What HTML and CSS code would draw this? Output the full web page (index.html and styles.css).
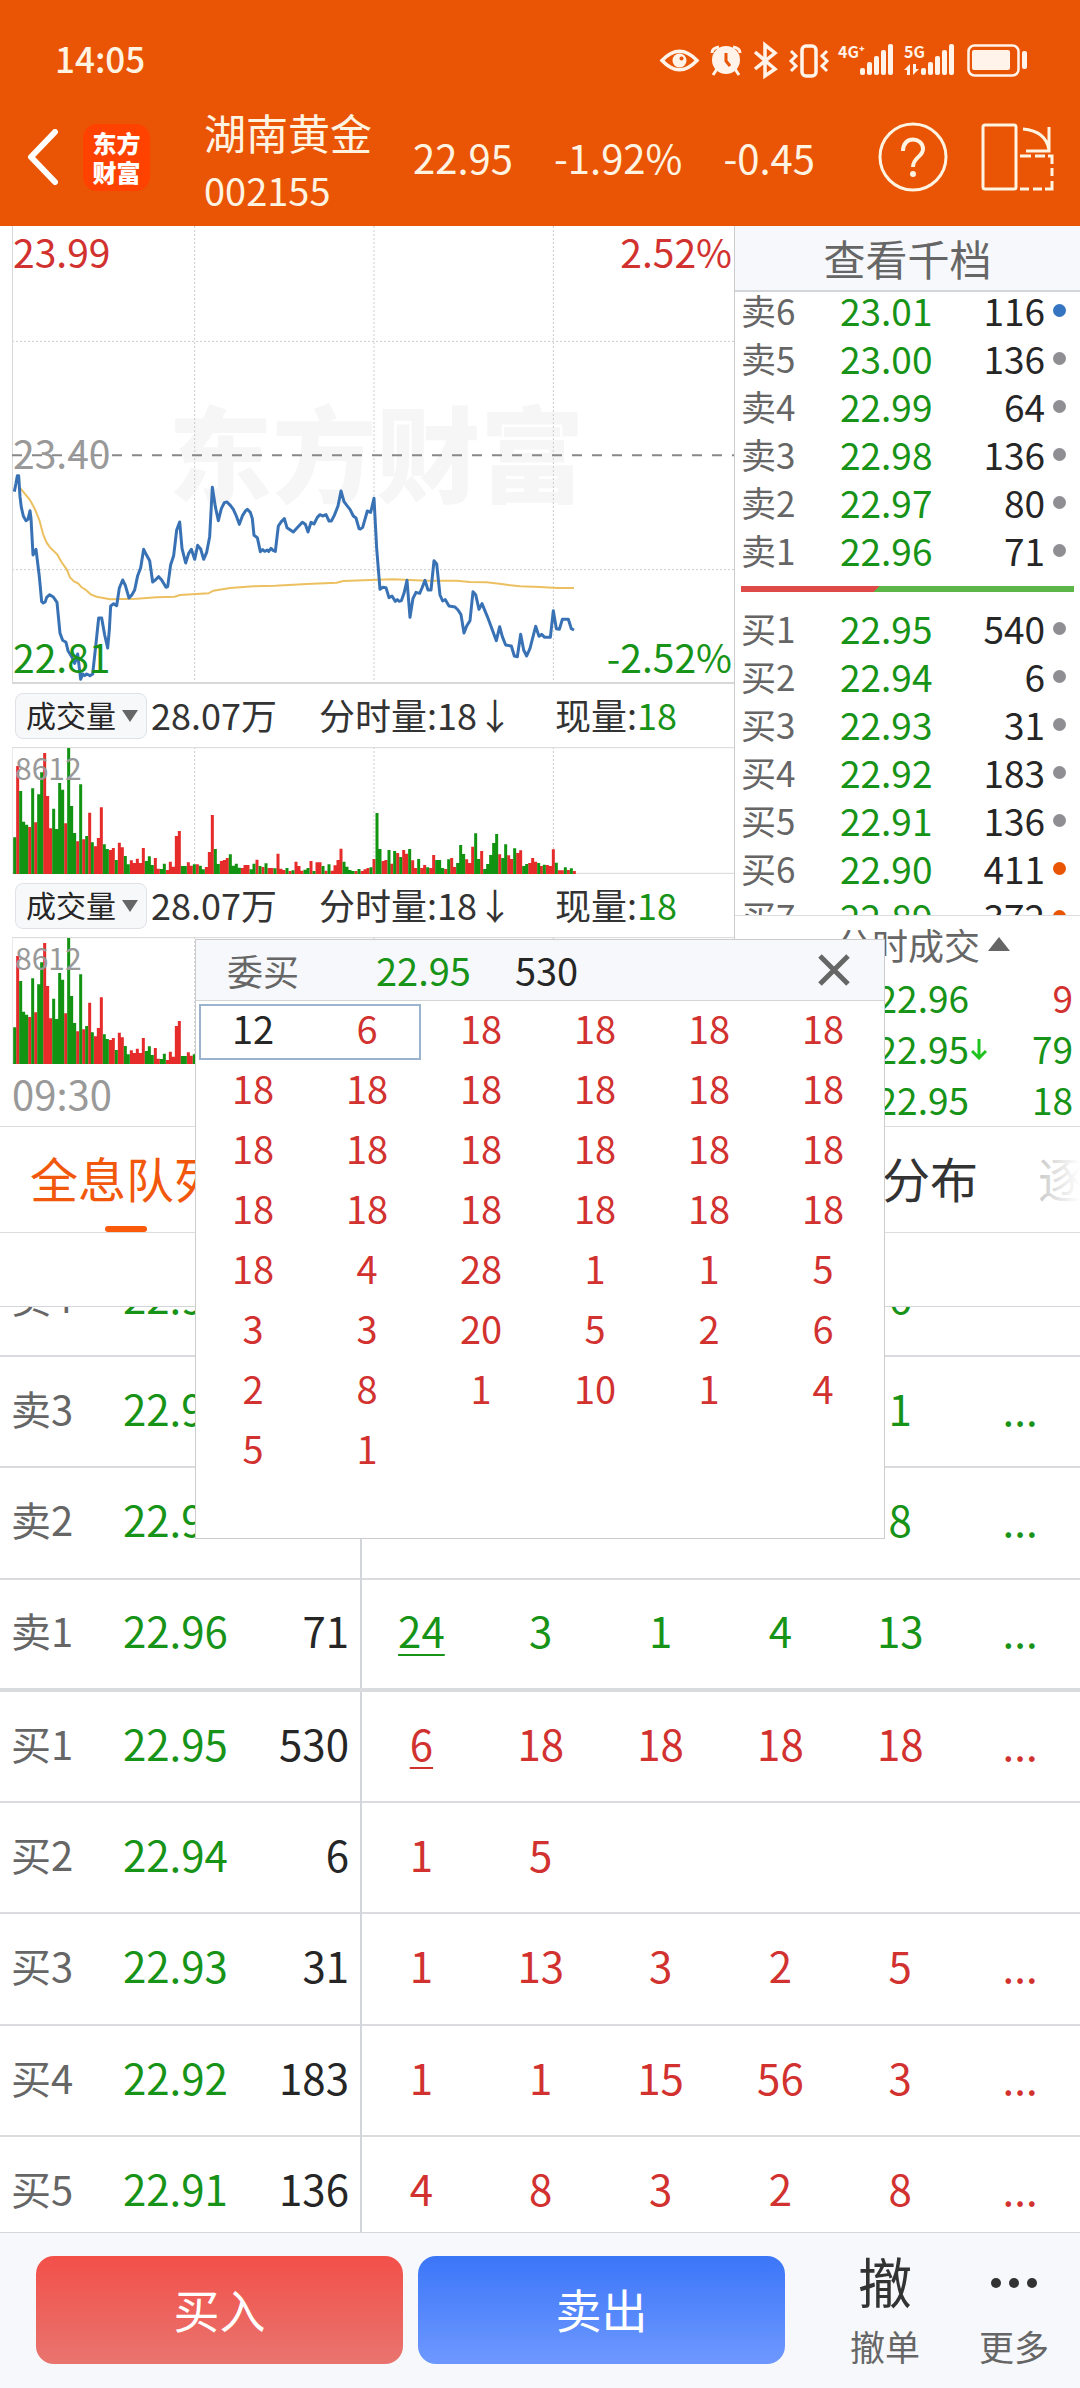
FILE: index.html
```html
<!DOCTYPE html>
<html lang="zh-CN">
<head>
<meta charset="utf-8">
<meta name="viewport" content="width=device-width, initial-scale=1">
<title>湖南黄金 002155</title>
<link rel="stylesheet" href="styles.css">
</head>
<body>
<div class="app">
  <header class="top">
    <div class="status">
      <span class="clock">14:05</span>
      <svg class="status-icons" viewBox="660 40 370 40" width="370" height="40" aria-hidden="true">
        <g fill="none" stroke="#fff3ea" stroke-width="3.5">
          <path d="M663 60.500Q680.500 42 698 60.500Q680.500 79 663 60.500Z"/>
          <path d="M713 53Q713 48 720 47M741 53Q741 48 734 47M718 69L714 75M736 69L740 75" stroke-width="3"/>
          <path d="M756 52L776 69L766 76V45L776 53L756 69"/>
          <rect x="803" y="46" width="14" height="30" rx="4"/>
          <path d="M792 51L797 56L792 61L797 66L792 71" stroke-width="3"/>
          <path d="M828 51L823 56L828 61L823 66L828 71" stroke-width="3"/>
          <rect x="969.500" y="45.500" width="50" height="30" rx="6" stroke-width="2.500"/>
        </g>
        <g fill="#fff3ea">
          <circle cx="680.500" cy="60.500" r="7"/>
          <circle cx="727" cy="60" r="14"/>
          <rect x="973" y="50" width="38" height="20" rx="2"/>
          <rect x="1023" y="51" width="5" height="18" rx="2"/>
          <rect x="861" y="68" width="5" height="7" rx="2"/><rect x="868" y="62" width="5" height="13" rx="2"/><rect x="875" y="56" width="5" height="19" rx="2"/><rect x="882" y="50" width="5" height="25" rx="2"/><rect x="889" y="44" width="5" height="31" rx="2"/>
          <rect x="922" y="68" width="5" height="7" rx="2"/><rect x="929" y="62" width="5" height="13" rx="2"/><rect x="936" y="56" width="5" height="19" rx="2"/><rect x="943" y="50" width="5" height="25" rx="2"/><rect x="950" y="44" width="5" height="31" rx="2"/>
          <path d="M905 70L911 64V75H908V70ZM914 64V75L920 69H917V64Z"/>
          <text class="net" x="839" y="58">4G⁺</text>
          <text class="net" x="905" y="58">5G</text>
        </g>
        <circle cx="682.500" cy="58.500" r="2" fill="#e95504"/>
        <path d="M727 53V61L731 66" fill="none" stroke="#e95504" stroke-width="3"/>
      </svg>
    </div>
    <div class="titlebar">
      <button class="icon-btn" aria-label="返回">
        <svg viewBox="0 0 31 56" width="31" height="56"><path d="M28 3L4 28L28 53" fill="none" stroke="#fff" stroke-width="6" stroke-linecap="round" stroke-linejoin="round"/></svg>
      </button>
      <div class="logo"><span>东方</span><span>财富</span></div>
      <h1 class="stock"><span class="name">湖南黄金</span><span>002155</span></h1>
      <div class="quote"><span>22.95</span><span>-1.92%</span><span>-0.45</span></div>
      <button class="icon-btn" aria-label="帮助">
        <svg viewBox="0 0 70 70" width="70" height="70" fill="none" stroke="#fff3e2" stroke-width="3"><circle cx="35" cy="35" r="33"/><path d="M25 29C25 13 45 15 45 27C45 35 35 35 35 45" stroke-width="4"/><circle cx="35" cy="52" r="3" fill="#fff3e2" stroke="none"/></svg>
      </button>
      <button class="icon-btn" aria-label="横屏">
        <svg viewBox="0 0 73 68" width="73" height="68" fill="none" stroke="#fff3e2" stroke-width="3"><rect x="2" y="2" width="33" height="64" rx="2"/><path d="M42 6Q65 8 68 27M68 4V28H45M39 33H50M54 33H64M67 33H71V41M71 45V53M39 66H48M52 66H61M64 66H71V58"/></svg>
      </button>
    </div>
  </header>

  <main class="board">
    <section class="charts">
      <div class="plot">
        <svg viewBox="36 18 2166 1374">
          <text class="watermark" x="505" y="824">东方财富</text>
          <g class="grid">
            <path d="M584 18V1392M1122 18V1392M1660 18V1392M36 364H2202M36 1049H2202"/>
          </g>
          <path class="axis" d="M36 18V1389H2202"/>
          <path class="base" d="M36 706H2202"/>
          <g class="avg">
            <polyline points="55,800 64,808 90,840 104,866 118,900 130,945 140,968 150,982 172,1004 185,1027 200,1048 210,1072 222,1084 234,1090 245,1102 258,1110 272,1123 290,1130 330,1138 410,1136 470,1132 524,1130 540,1125 626,1120 640,1112 690,1104 760,1099 826,1097 920,1092 1010,1088 1030,1083 1110,1080 1180,1078 1280,1082 1370,1082 1410,1086 1460,1087 1510,1093 1560,1099 1620,1101 1670,1104 1722,1104"/>
          </g>
          <g class="price">
            <polyline points="43,815 48,790 52,767 56,767 60,830 64,862 70,888 78,902 84,898 90,872 93,895 99,1005 108,988 118,1070 125,1145 130,1149 136,1145 140,1132 149,1124 160,1131 171,1147 180,1240 188,1261 198,1267 204,1292 215,1310 224,1330 233,1302 242,1378 248,1362 254,1367 260,1362 270,1367 278,1362 288,1270 296,1194 305,1194 314,1245 323,1284 328,1230 332,1158 341,1151 350,1157 358,1104 368,1080 376,1096 387,1134 396,1124 404,1110 413,1067 422,1043 431,988 440,1006 449,1022 458,1086 466,1080 476,1070 485,1080 498,1102 503,1100 512,1034 521,1007 530,930 539,906 546,985 557,1029 566,1000 574,988 584,1018 593,976 602,987 611,1018 620,997 629,950 637,802 646,860 655,902 664,866 673,848 681,846 691,856 700,868 709,888 718,913 728,886 737,872 742,868 751,877 757,896 762,946 772,953 781,995 788,989 794,994 802,990 806,994 813,985 819,991 826,994 835,918 844,905 853,896 861,923 870,929 880,936 893,922 907,907 916,913 924,936 933,907 942,912 952,892 960,884 968,888 978,884 987,903 994,903 1003,886 1014,858 1023,813 1032,845 1041,857 1050,868 1060,888 1068,894 1077,926 1083,928"/>
            <polyline transform="translate(1080)" points="0,928 8,922 22,873 32,877 42,835 50,985 60,1108 68,1102 78,1103 87,1133 96,1128 106,1144 112,1139 118,1144 124,1142 132,1120 141,1081 150,1192 159,1135 168,1117 179,1120 186,1104 195,1081 204,1110 213,1110 222,1022 230,1032 240,1125 248,1143 256,1139 267,1158 285,1161 294,1170 303,1184 312,1239 320,1218 330,1202 339,1115 347,1124 357,1168 366,1151 383,1192 409,1262 419,1220 427,1250 437,1275 454,1278 463,1308 472,1310 482,1243 491,1290 500,1308 510,1285 527,1219 537,1249 545,1243 554,1252 571,1252 580,1172 589,1226 598,1228 607,1198 625,1198 634,1226 642,1230"/>
          </g>
        </svg>
        <span class="mark top-left up">23.99</span>
        <span class="mark top-right up">2.52%</span>
        <span class="mark mid-left">23.40</span>
        <span class="mark bottom-left down">22.81</span>
        <span class="mark bottom-right down">-2.52%</span>
      </div>

      <div class="indicator">
        <label class="picker"><select aria-label="指标一"><option>成交量</option></select></label>
        <span>28.07万</span><span class="minute">分时量:18↓</span><span>现量:<b class="down">18</b></span>
      </div>
      <div class="plot volume">
        <svg viewBox="36 201 2166 381">
          <g class="grid"><path d="M584 201V582M1122 201V582M1660 201V582"/></g>
          <path class="axis thin" d="M36 582V203H2202M36 580H2202"/>
          <g class="bars"></g>
        </svg>
        <span class="mark peak">8612</span>
      </div>

      <div class="indicator">
        <label class="picker"><select aria-label="指标二"><option>成交量</option></select></label>
        <span>28.07万</span><span class="minute">分时量:18↓</span><span>现量:<b class="down">18</b></span>
      </div>
      <div class="plot volume">
        <svg viewBox="36 201 2166 381">
          <g class="grid"><path d="M584 201V582M1122 201V582M1660 201V582"/></g>
          <path class="axis thin" d="M36 582V203H2202M36 580H2202"/>
          <g class="bars"></g>
        </svg>
        <span class="mark peak">8612</span>
      </div>
      <div class="times">09:30</div>
    </section>

    <section class="depth">
      <button class="depth-head">查看千档</button>
      <div class="levels">
        <table class="book asks">
          <tr><th>卖6</th><td class="down">23.01</td><td class="qty">116</td><td class="dot blue"></td></tr>
          <tr><th>卖5</th><td class="down">23.00</td><td class="qty">136</td><td class="dot"></td></tr>
          <tr><th>卖4</th><td class="down">22.99</td><td class="qty">64</td><td class="dot"></td></tr>
          <tr><th>卖3</th><td class="down">22.98</td><td class="qty">136</td><td class="dot"></td></tr>
          <tr><th>卖2</th><td class="down">22.97</td><td class="qty">80</td><td class="dot"></td></tr>
          <tr><th>卖1</th><td class="down">22.96</td><td class="qty">71</td><td class="dot"></td></tr>
        </table>
        <div class="ratio"></div>
        <table class="book">
          <tr><th>买1</th><td class="down">22.95</td><td class="qty">540</td><td class="dot"></td></tr>
          <tr><th>买2</th><td class="down">22.94</td><td class="qty">6</td><td class="dot"></td></tr>
          <tr><th>买3</th><td class="down">22.93</td><td class="qty">31</td><td class="dot"></td></tr>
          <tr><th>买4</th><td class="down">22.92</td><td class="qty">183</td><td class="dot"></td></tr>
          <tr><th>买5</th><td class="down">22.91</td><td class="qty">136</td><td class="dot"></td></tr>
          <tr><th>买6</th><td class="down">22.90</td><td class="qty">411</td><td class="dot orange"></td></tr>
          <tr><th>买7</th><td class="down">22.89</td><td class="qty">372</td><td class="dot orange"></td></tr>
        </table>
      </div>
      <div class="ticks">
        <button class="ticks-head">分时成交<i class="tri-up"></i></button>
        <table>
          <tr><td class="down">22.96</td><td></td><td class="up">9</td></tr>
          <tr><td class="down">22.95</td><td><svg class="fall" viewBox="0 0 16 22" width="16" height="22"><path d="M8 1V20M1 13L8 20L15 13"/></svg></td><td class="down">79</td></tr>
          <tr><td class="down">22.95</td><td></td><td class="down">18</td></tr>
        </table>
      </div>
    </section>
  </main>

  <nav class="tabs">
    <a href="#queue" class="active">全息队列</a><a href="#detail">成交明细</a><a href="#flow">资金流向</a><a href="#spread">成交分布</a><a href="#each">逐笔成交</a>
  </nav>
  <div class="gap"></div>

  <section class="queue" id="queue">
    <table>
      <colgroup><col class="c-label"><col class="c-price"><col class="c-qty"><col span="6"></colgroup>
      <tr class="sell"><th>卖4</th><td>22.99</td><td>64</td><td></td><td></td><td></td><td></td><td>6</td><td></td></tr>
      <tr class="sell"><th>卖3</th><td>22.98</td><td>136</td><td></td><td></td><td></td><td></td><td>1</td><td>...</td></tr>
      <tr class="sell"><th>卖2</th><td>22.97</td><td>80</td><td></td><td></td><td></td><td></td><td>8</td><td>...</td></tr>
      <tr class="sell last"><th>卖1</th><td>22.96</td><td>71</td><td><u>24</u></td><td>3</td><td>1</td><td>4</td><td>13</td><td>...</td></tr>
      <tr class="buy"><th>买1</th><td>22.95</td><td>530</td><td><u>6</u></td><td>18</td><td>18</td><td>18</td><td>18</td><td>...</td></tr>
      <tr class="buy"><th>买2</th><td>22.94</td><td>6</td><td>1</td><td>5</td><td></td><td></td><td></td><td></td></tr>
      <tr class="buy"><th>买3</th><td>22.93</td><td>31</td><td>1</td><td>13</td><td>3</td><td>2</td><td>5</td><td>...</td></tr>
      <tr class="buy"><th>买4</th><td>22.92</td><td>183</td><td>1</td><td>1</td><td>15</td><td>56</td><td>3</td><td>...</td></tr>
      <tr class="buy"><th>买5</th><td>22.91</td><td>136</td><td>4</td><td>8</td><td>3</td><td>2</td><td>8</td><td>...</td></tr>
    </table>
  </section>

  <footer class="actions">
    <button class="trade buy-btn">买入</button>
    <button class="trade sell-btn">卖出</button>
    <button class="tool cancel"><span class="glyph">撤</span><span>撤单</span></button>
    <button class="tool"><span class="glyph dots"><i></i><i></i><i></i></span><span>更多</span></button>
  </footer>

  <div class="popup" role="dialog" aria-label="委买">
    <div class="popup-head">
      <span class="side">委买</span><span class="down">22.95</span><span class="total">530</span>
      <button class="icon-btn close" aria-label="关闭"><svg viewBox="0 0 32 32" width="32" height="32"><path d="M2 2L30 30M30 2L2 30" stroke="#666" stroke-width="5"/></svg></button>
    </div>
    <div class="orders">
      <table>
        <tr><td class="count">12</td><td>6</td><td>18</td><td>18</td><td>18</td><td>18</td></tr>
        <tr><td>18</td><td>18</td><td>18</td><td>18</td><td>18</td><td>18</td></tr>
        <tr><td>18</td><td>18</td><td>18</td><td>18</td><td>18</td><td>18</td></tr>
        <tr><td>18</td><td>18</td><td>18</td><td>18</td><td>18</td><td>18</td></tr>
        <tr><td>18</td><td>4</td><td>28</td><td>1</td><td>1</td><td>5</td></tr>
        <tr><td>3</td><td>3</td><td>20</td><td>5</td><td>2</td><td>6</td></tr>
        <tr><td>2</td><td>8</td><td>1</td><td>10</td><td>1</td><td>4</td></tr>
        <tr><td>5</td><td>1</td><td></td><td></td><td></td><td></td></tr>
      </table>
      <span class="selection"></span>
    </div>
  </div>
</div>
<script src="volume.js"></script>
</body>
</html>
```
FILE: volume.js
```js
// Minute volume bars: top edge of each bar, and its direction (R up, G down).
const minutes = `472G 258R 333G 425G 434G 441R 325G 427R 343G 277G 219R 348R 445R 386G 447G 309G 329G 430R 204G 378G
459G 484R 313G 478R 468G 398R 487G 499R 474R 382R 493G 507G 510R 504R 540G 488R 502R 528G 553G 541R
549R 536R 549R 504R 543G 529G 555G 534R 566R 567G 551G 570R 545R 560R 468R 453R 558G 558G 547R 557R
553G 553R 557G 568G 561R 516R 405R 507G 552G 543R 540R 534R 523G 557G 551G 563G 564R 555R 555R 568G
551G 539R 558G 561R 550G 564R 564R 565G 521R 566R 570R 564G 573R 571G 545R 558R 572R 569G 564G 543R
573G 547R 547R 558G 572R 553G 572R 556R 540R 506R 545G 560G 570G 573G 573R 567G 573R 568R 564R 562G
537R 399G 507G 543R 540R 510G 551R 513G 519R 531G 510R 521R 507G 541R 564R 537G 564R 555R 562G 564R
525R 540G 540G 564G 567R 538G 534R 561R 549G 495G 522G 538R 549R 500R 460G 537G 513R 567G 552G 525G
489G 462G 523R 534G 493G 526R 537R 505G 519R 511R 558G 552G 549R 534R 545R 549G 558R 554G 555R 558R
508R 548G 571R 571R 562G 570R 565G 573R`.split(/\s+/);

const FLOOR = 582;
const PITCH = 8.98;
const paths = { R: "", G: "" };
minutes.forEach((m, i) => {
  paths[m.slice(-1)] += `M${Math.round(44 + i * PITCH)} ${FLOOR}V${parseInt(m, 10)}`;
});
document.querySelectorAll(".bars").forEach((g) => {
  g.innerHTML = `<path class="bar-up" d="${paths.R}"/><path class="bar-down" d="${paths.G}"/>`;
});
```
FILE: styles.css
```css
* { box-sizing: border-box; }
body {
  margin: 0;
  background: #fff;
  color: #262626;
  font-family: "Noto Sans CJK SC", "Noto Sans", sans-serif;
}
button {
  padding: 0;
  border: 0;
  background: none;
  color: inherit;
  font: inherit;
}
svg { display: block; }
table { width: 100%; border-collapse: collapse; table-layout: fixed; }
th, td { padding: 0; font-weight: 400; }
.up { color: #d2322f; }
.down { color: #179317; }

.app {
  position: relative;
  display: flex;
  flex-direction: column;
  height: 100vh;
  overflow: hidden;
}

/* header */
.top { height: 226px; background: #e95504; color: #fff3e2; flex: none; }
.status {
  display: flex;
  justify-content: space-between;
  align-items: center;
  height: 88px;
  padding: 32px 51px 0 55px;
}
.clock { font-size: 35px; line-height: 36px; padding-bottom: 4px; font-weight: 500; }
.net { font-size: 16px; font-weight: 700; }
.titlebar {
  display: flex;
  align-items: center;
  height: 138px;
  padding: 0 26px 0 27px;
}
.icon-btn { flex: none; }
.titlebar .icon-btn + .icon-btn { margin-left: 33px; }
.logo {
  display: flex;
  flex-direction: column;
  justify-content: center;
  flex: none;
  width: 67px;
  height: 67px;
  margin: 0 54px 0 25px;
  border-radius: 14px;
  background: #ff4200;
  color: #fff;
  text-align: center;
  font-size: 24px;
  line-height: 29px;
  font-weight: 900;
}
.stock {
  display: flex;
  flex-direction: column;
  margin: 0;
  padding-top: 8px;
  font-size: 38px;
  line-height: 58px;
  font-weight: 400;
}
.name { font-size: 42px; }
.quote { display: flex; flex: 1; gap: 41px; padding-left: 41px; font-size: 40px; line-height: 56px; }

/* charts */
.board { display: grid; grid-template-columns: 734fr 346fr; height: 900px; flex: none; }
.charts { min-width: 0; padding-left: 12px; }
.plot { position: relative; }
.plot svg { width: 100%; }
.grid { fill: none; stroke: #ccc; stroke-width: 3; stroke-dasharray: 6 6; }
.axis { fill: none; stroke: #d8d8d8; stroke-width: 6; }
.axis.thin { stroke-width: 3; }
.base { stroke: #888; stroke-width: 6; stroke-dasharray: 30 30; }
.avg { fill: none; stroke: #ecc060; stroke-width: 6; }
.price { fill: none; stroke: #3872b5; stroke-width: 9; stroke-linejoin: round; }
.bar-up { stroke: #e62b2b; stroke-width: 9; }
.bar-down { stroke: #129312; stroke-width: 9; }
.watermark { font-size: 312px; font-weight: 900; fill: #f6f6f6; }
.mark { position: absolute; font-size: 39px; line-height: 48px; color: #999; }
.mark.up { color: #d2322f; }
.mark.down { color: #179317; }
.top-left { top: 1px; left: 1px; }
.top-right { top: 1px; right: 2px; }
.mid-left { top: 202px; left: 1px; }
.bottom-left { bottom: 4px; left: 1px; }
.bottom-right { bottom: 4px; right: 2px; }
.peak { top: 4px; left: 3px; font-size: 30px; line-height: 32px; }
.indicator {
  display: flex;
  align-items: center;
  height: 63px;
  padding-left: 3px;
  font-size: 36px;
  line-height: 40px;
  color: #333;
}
.indicator > span { padding-bottom: 4px; }
.indicator b { font-weight: 400; }
.minute { margin: 0 42px; }
.picker { position: relative; margin-right: 4px; }
.picker select {
  display: block;
  width: 132px;
  height: 46px;
  padding: 0 0 4px 10px;
  border: 1px solid #dfe2e6;
  border-radius: 8px;
  background: #f7f8fa;
  color: #262626;
  font: 30px/40px "Noto Sans CJK SC", sans-serif;
  appearance: none;
}
.picker::after {
  content: "";
  position: absolute;
  top: 17px;
  right: 9px;
  border: 8px solid transparent;
  border-top: 12px solid #666;
  border-bottom: 0;
}
.times { font-size: 40px; line-height: 58px; color: #999; }

/* order book */
.depth { display: flex; flex-direction: column; min-width: 0; border-left: 1px solid #ccc; }
.depth-head {
  height: 66px;
  border-bottom: 2px solid #d2d6da;
  background: #f6f8fb;
  color: #666;
  font-size: 42px;
  line-height: 60px;
}
.levels { height: 624px; overflow: hidden; border-bottom: 1px solid #ddd; }
.book { font-size: 37px; line-height: 48px; }
.book tr { height: 48px; }
.asks { margin-top: -6px; }
.book th { width: 105px; padding-left: 6px; text-align: left; font-size: 35px; color: #666; }
.book .qty { width: 110px; text-align: right; }
.book .dot { width: 35px; }
.dot::before {
  content: "";
  display: block;
  width: 13px;
  height: 13px;
  margin-left: 8px;
  border-radius: 50%;
  background: #8e8e93;
}
.dot.blue::before { background: #3474c0; }
.dot.orange::before { background: #e95504; }
.ratio {
  height: 6px;
  margin: 12px 6px;
  background: linear-gradient(135deg, #de4a48 0 41%, #5bb548 41%);
}
.ticks-head { display: flex; align-items: center; gap: 8px; margin-left: 101px; height: 56px; font-size: 36px; line-height: 56px; color: #666; }
.tri-up { border: 11px solid transparent; border-bottom: 14px solid #666; border-top: 0; }
.ticks table { font-size: 37px; line-height: 51px; }
.ticks tr { height: 51px; }
.ticks td:first-child { width: 234px; text-align: right; }
.ticks td:nth-child(2) { width: 20px; padding-left: 2px; }
.ticks td:last-child { padding-right: 7px; text-align: right; }
.fall { fill: none; stroke: #1ec41e; stroke-width: 3; }

/* tabs */
.tabs {
  position: relative;
  display: flex;
  gap: 60px;
  flex: none;
  height: 107px;
  padding-left: 30px;
  overflow: hidden;
  border-top: 1px solid #ddd;
  border-bottom: 1px solid #ddd;
  font-size: 48px;
  line-height: 101px;
}
.tabs::after {
  content: "";
  position: absolute;
  inset: 0 0 0 auto;
  width: 80px;
  background: linear-gradient(90deg, rgba(255, 255, 255, .5), #fff);
}
.tabs a { position: relative; flex: none; color: #333; text-decoration: none; }
.tabs .active { color: #f2580c; }
.tabs .active::after {
  content: "";
  position: absolute;
  bottom: 0;
  left: 75px;
  width: 42px;
  height: 6px;
  border-radius: 3px;
  background: #fa5a0a;
}
.gap { flex: none; height: 74px; border-bottom: 1px solid #d2d6da; }

/* queue table */
.queue { flex: 1; min-height: 0; overflow: hidden; }
.queue table { margin-top: -63px; font-size: 42px; line-height: 60px; }
.queue tr { height: 112px; border-bottom: 2px solid #d9dbde; }
.queue tr:nth-child(even) { height: 111px; }
.queue tr.last { border-bottom-width: 4px; }
.queue td, .queue th { padding-bottom: 8px; }
.queue td { text-align: center; }
.queue th { padding-left: 11px; text-align: left; font-size: 40px; color: #666; }
.queue td:nth-child(2) { text-align: left; color: #179317; }
.queue td:nth-child(3) { padding-right: 11px; text-align: right; border-right: 2px solid #d2d6da; }
.c-label { width: 123px; }
.c-price { width: 119px; }
.c-qty { width: 119px; }
.sell td:nth-child(n + 4) { color: #179317; }
.buy td:nth-child(n + 4) { color: #d2322f; }
.queue u { text-decoration-thickness: 2px; text-underline-offset: 6px; }

/* bottom bar */
.actions {
  display: flex;
  flex: none;
  height: 156px;
  padding: 23px 22px 24px 36px;
  border-top: 1px solid #d5d8db;
  background: #f6f8fb;
}
.trade {
  flex: 1;
  height: 108px;
  margin-right: 15px;
  padding-bottom: 4px;
  border-radius: 18px;
  color: #fff;
  font-size: 46px;
}
.buy-btn { background: linear-gradient(#f25049, #e9746f); }
.sell-btn { background: linear-gradient(#3b76f8, #6e98ff); }
.tool {
  display: flex;
  flex-direction: column;
  align-items: center;
  justify-content: flex-start;
  width: 88px;
  color: #666;
  font-size: 35px;
  line-height: 48px;
}
.tool.cancel { width: 170px; }
.glyph { flex: none; height: 66px; color: #333; font-size: 54px; line-height: 50px; }
.dots { display: flex; align-items: center; gap: 8px; padding-bottom: 12px; }
.dots i { width: 10px; height: 10px; border-radius: 50%; background: #333; }

/* popup */
.popup {
  position: absolute;
  top: 939px;
  left: 0;
  right: 0;
  width: 690px;
  height: 600px;
  margin: 0 auto;
  border: 1px solid #ccc;
  background: #fff;
}
.popup-head {
  display: flex;
  align-items: center;
  height: 61px;
  padding: 0 34px 0 31px;
  border-bottom: 1px solid #d2d4d6;
  background: #f6f8fb;
  font-size: 38px;
  line-height: 50px;
}
.side { width: 149px; font-size: 36px; color: #666; }
.total { margin-left: 44px; }
.close { margin-left: auto; }
.orders { position: relative; padding-right: 4px; color: #d2322f; font-size: 38px; line-height: 50px; }
.orders td { height: 60px; padding-bottom: 6px; text-align: center; }
.count { color: #262626; }
.selection { position: absolute; top: 3px; left: 3px; width: 222px; height: 56px; border: 2px solid #9ab3cf; }
```
